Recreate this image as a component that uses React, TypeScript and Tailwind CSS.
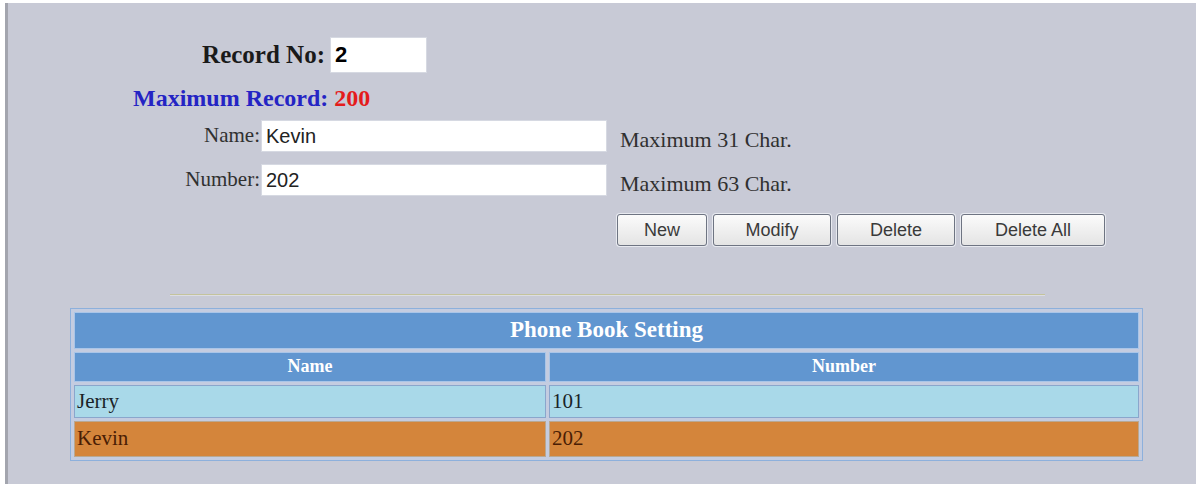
import { useState } from 'react';

type Entry = { name: string; number: string };

const entries: Entry[] = [
  { name: 'Jerry', number: '101' },
  { name: 'Kevin', number: '202' },
];

const serif = "font-['Liberation_Serif',_'Times_New_Roman',_serif]";
const sans = "font-['Liberation_Sans',_Arial,_sans-serif]";

const buttons = [
  { label: 'New', w: 'w-[90px]' },
  { label: 'Modify', w: 'w-[118px]' },
  { label: 'Delete', w: 'w-[118px]' },
  { label: 'Delete All', w: 'w-[144px]' },
];

const App = () => {
  const [recordNo, setRecordNo] = useState('2');
  const [name, setName] = useState('Kevin');
  const [number, setNumber] = useState('202');
  const selected = 1;

  return (
    <div className="w-[1196px] h-[484px] bg-white pt-[3px] pl-[5px] overflow-hidden">
      <div className={`h-full border-l-[3px] border-[#a3a5ae] bg-[#c8cad6] pt-[34px] ${serif}`}>
        {/* record number */}
        <div className="flex items-center h-[36px]">
          <div className="w-[322px] text-right font-bold text-[25px] text-[#1a1a1a] pr-[5px]">Record No:</div>
          <input
            value={recordNo}
            onChange={(e) => setRecordNo(e.target.value)}
            className={`w-[97px] h-[36px] bg-white border border-[#d6d9e2] px-[4px] text-[22px] font-bold text-black outline-none ${sans}`}
          />
        </div>

        <div className="ml-[125px] mt-[13px] h-[24px] leading-[24px] font-bold text-[24px] text-[#2424c4]">
          Maximum Record: <span className="text-[#e41c1c]">200</span>
        </div>

        {/* name / number fields */}
        <div className="flex items-center mt-[10px] h-[32px]">
          <div className="w-[252px] text-right text-[21px] text-[#303030]">Name:</div>
          <input
            value={name}
            onChange={(e) => setName(e.target.value)}
            className={`ml-[1px] w-[346px] h-[32px] bg-white border border-[#d6d9e2] px-[4px] text-[20px] text-[#222] outline-none ${sans}`}
          />
          <div className="ml-[13px] text-[22px] text-[#303030] pt-[6px]">Maximum 31 Char.</div>
        </div>
        <div className="flex items-center mt-[12px] h-[32px]">
          <div className="w-[252px] text-right text-[21px] text-[#303030]">Number:</div>
          <input
            value={number}
            onChange={(e) => setNumber(e.target.value)}
            className={`ml-[1px] w-[346px] h-[32px] bg-white border border-[#d6d9e2] px-[4px] text-[20px] text-[#222] outline-none ${sans}`}
          />
          <div className="ml-[13px] text-[22px] text-[#303030] pt-[6px]">Maximum 63 Char.</div>
        </div>

        {/* actions */}
        <div className="flex gap-[6px] ml-[609px] mt-[18px]">
          {buttons.map((b) => (
            <button
              key={b.label}
              className={`${b.w} h-[32px] rounded-[3px] border border-[#6e7482] bg-gradient-to-b from-[#fbfbfb] to-[#e4e4e4] text-[18px] text-[#3a3a3a] shadow-[0_0_0_1px_#e8eaf0] ${sans}`}
            >
              {b.label}
            </button>
          ))}
        </div>

        <div className="ml-[162px] mt-[48px] w-[875px] border-t border-[#c4c39c] border-b border-b-[#dcdde4]" />

        {/* phone book list */}
        <table className="ml-[62px] mt-[12px] w-[1073px] border border-[#8db0dc] border-separate border-spacing-[3px] bg-[#c4cce0]">
          <thead>
            <tr>
              <th colSpan={2} className="h-[35px] bg-[#6196d0] border border-[#a9c5e8] text-white font-bold text-[23px]">
                Phone Book Setting
              </th>
            </tr>
            <tr>
              <th className="w-[472px] h-[30px] bg-[#6196d0] border border-[#a9c5e8] text-white font-bold text-[18px]">Name</th>
              <th className="h-[30px] bg-[#6196d0] border border-[#a9c5e8] text-white font-bold text-[18px]">Number</th>
            </tr>
          </thead>
          <tbody>
            {entries.map((e, i) => {
              const rowCls =
                i === selected
                  ? 'h-[36px] bg-[#d4853b] text-[#4a1d04] border-[#b9a892]'
                  : 'h-[33px] bg-[#a9d9e9] text-[#1a2328] border-[#8aa6cc]';
              return (
                <tr key={e.name}>
                  <td className={`border px-[2px] text-[21px] ${rowCls}`}>{e.name}</td>
                  <td className={`border px-[2px] text-[21px] ${rowCls}`}>{e.number}</td>
                </tr>
              );
            })}
          </tbody>
        </table>
      </div>
    </div>
  );
};

export default App;
